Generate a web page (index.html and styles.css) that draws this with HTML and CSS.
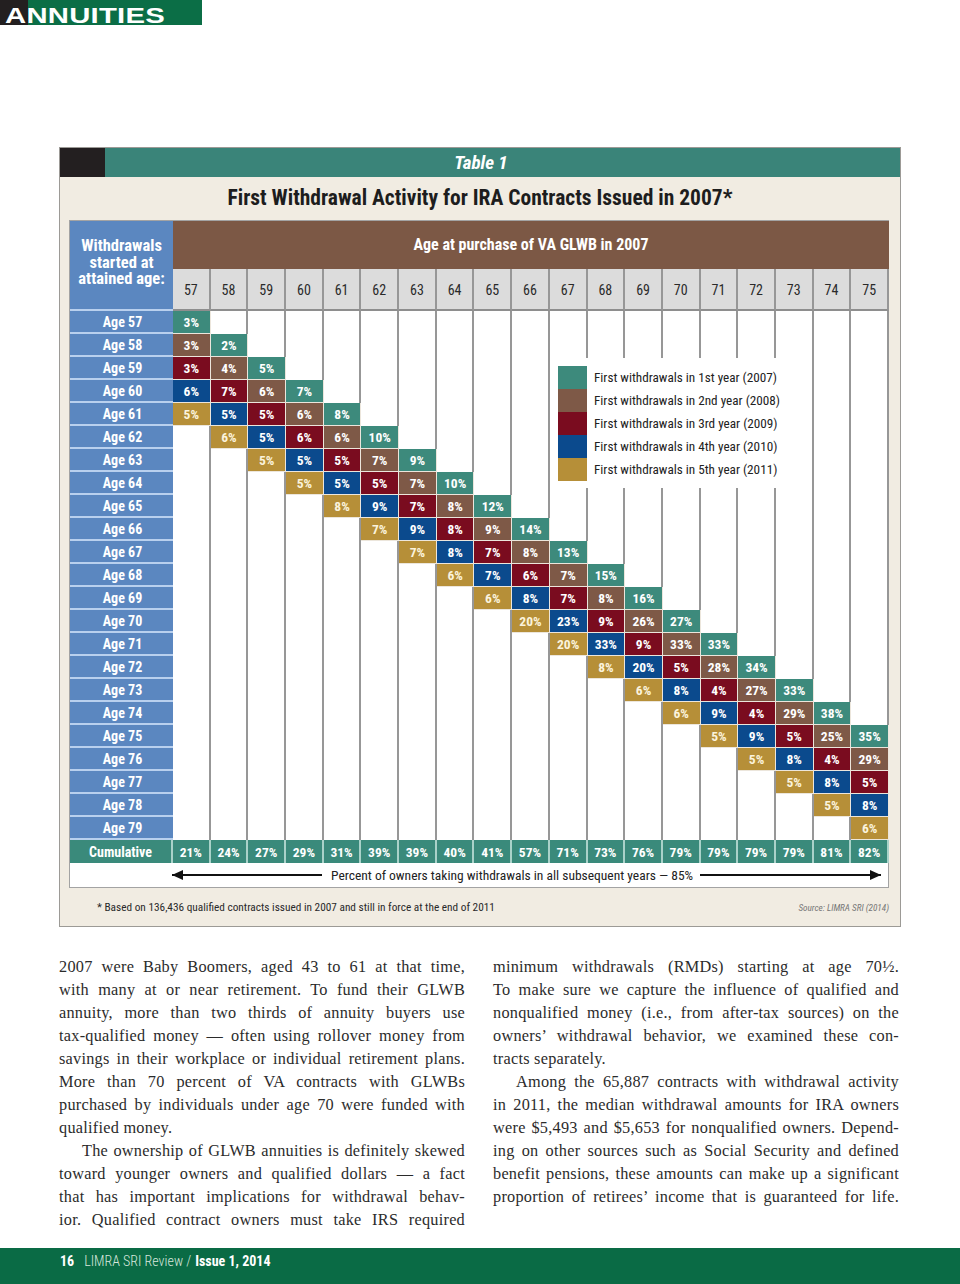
FILE: index.html
```html
<!DOCTYPE html>
<html lang="en">
<head>
<meta charset="utf-8">
<title>Annuities – Table 1</title>
<link rel="stylesheet" href="styles.css">
</head>
<body>
<div class="page">
  <div class="tab"><span class="tab-text">ANNUITIES</span></div>

  <section class="table-box">
    <div class="tbar">Table 1</div>
    <h1 class="ttitle">First Withdrawal Activity for IRA Contracts Issued in 2007*</h1>

    <div class="grid">
      <div class="corner">Withdrawals<br>started at<br>attained age:</div>
      <div class="band">Age at purchase of VA GLWB in 2007</div>
      <div class="num">57</div><div class="num">58</div><div class="num">59</div><div class="num">60</div>
      <div class="num">61</div><div class="num">62</div><div class="num">63</div><div class="num">64</div>
      <div class="num">65</div><div class="num">66</div><div class="num">67</div><div class="num">68</div>
      <div class="num">69</div><div class="num">70</div><div class="num">71</div><div class="num">72</div>
      <div class="num">73</div><div class="num">74</div><div class="num">75</div>

      <div class="cum-label">Cumulative</div>
      <div class="cum">21%</div><div class="cum">24%</div><div class="cum">27%</div><div class="cum">29%</div>
      <div class="cum">31%</div><div class="cum">39%</div><div class="cum">39%</div><div class="cum">40%</div>
      <div class="cum">41%</div><div class="cum">57%</div><div class="cum">71%</div><div class="cum">73%</div>
      <div class="cum">76%</div><div class="cum">79%</div><div class="cum">79%</div><div class="cum">79%</div>
      <div class="cum">79%</div><div class="cum">81%</div><div class="cum">82%</div>

      <div class="arrow-row">
        <span class="arrow left"></span>
        <span class="arrow-text">Percent of owners taking withdrawals in all subsequent years — 85%</span>
        <span class="arrow right"></span>
      </div>

      <div class="legend">
        <div class="lg"><span class="sw y1"></span>First withdrawals in 1st year (2007)</div>
        <div class="lg"><span class="sw y2"></span>First withdrawals in 2nd year (2008)</div>
        <div class="lg"><span class="sw y3"></span>First withdrawals in 3rd year (2009)</div>
        <div class="lg"><span class="sw y4"></span>First withdrawals in 4th year (2010)</div>
        <div class="lg"><span class="sw y5"></span>First withdrawals in 5th year (2011)</div>
      </div>
    </div>

    <div class="foot">
      <span class="note">* Based on 136,436 qualified contracts issued in 2007 and still in force at the end of 2011</span>
      <span class="source">Source: LIMRA SRI (2014)</span>
    </div>
  </section>

  <div class="article">
    <div class="col">
      <p>
        <span class="ln">2007 were Baby Boomers, aged 43 to 61 at that time,</span>
        <span class="ln">with many at or near retirement. To fund their GLWB</span>
        <span class="ln">annuity, more than two thirds of annuity buyers use</span>
        <span class="ln">tax-qualified money — often using rollover money from</span>
        <span class="ln">savings in their workplace or individual retirement plans.</span>
        <span class="ln">More than 70 percent of VA contracts with GLWBs</span>
        <span class="ln">purchased by individuals under age 70 were funded with</span>
        <span class="ln end">qualified money.</span>
      </p>
      <p class="indent">
        <span class="ln">The ownership of GLWB annuities is definitely skewed</span>
        <span class="ln">toward younger owners and qualified dollars — a fact</span>
        <span class="ln">that has important implications for withdrawal behav-</span>
        <span class="ln">ior. Qualified contract owners must take IRS required</span>
      </p>
    </div>
    <div class="col">
      <p>
        <span class="ln">minimum withdrawals (RMDs) starting at age 70½.</span>
        <span class="ln">To make sure we capture the influence of qualified and</span>
        <span class="ln">nonqualified money (i.e., from after-tax sources) on the</span>
        <span class="ln">owners’ withdrawal behavior, we examined these con-</span>
        <span class="ln end">tracts separately.</span>
      </p>
      <p class="indent">
        <span class="ln">Among the 65,887 contracts with withdrawal activity</span>
        <span class="ln">in 2011, the median withdrawal amounts for IRA owners</span>
        <span class="ln">were $5,493 and $5,653 for nonqualified owners. Depend-</span>
        <span class="ln">ing on other sources such as Social Security and defined</span>
        <span class="ln">benefit pensions, these amounts can make up a significant</span>
        <span class="ln">proportion of retirees’ income that is guaranteed for life.</span>
      </p>
    </div>
  </div>

  <footer class="footer">
    <span class="pg">16</span>
    <span class="mag">LIMRA SRI Review /</span>
    <span class="issue">Issue 1, 2014</span>
  </footer>
</div>
<script src="script.js"></script>
</body>
</html>
```
FILE: styles.css
```css
* { box-sizing: border-box; }
html, body { margin: 0; padding: 0; background: #fff; }
body { width: 960px; height: 1284px; overflow: hidden; }

.page {
  height: 1284px;
  display: flex;
  flex-direction: column;
  font-family: "Roboto Condensed", "Liberation Sans", Arial, sans-serif;
  color: #222;
}
.page > * { flex: none; }

/* section tab */
.tab {
  width: 202px;
  height: 25px;
  background: linear-gradient(to right, #231f20 28px, #0b6e46 28px);
  font-family: "Liberation Sans", Arial, sans-serif;
}
.tab-text {
  display: block;
  padding: 8px 0 0 5px;
  line-height: 16px;
  height: 25px;
  font-size: 22px;
  font-weight: bold;
  color: #fff;
  transform: scaleX(1.33);
  transform-origin: 5px 0;
  letter-spacing: 0.2px;
}

/* table box */
.table-box {
  margin: 122px 0 0 59px;
  width: 842px;
  background: #f1ece2;
  border: 1px solid #9c9a96;
}
.tbar {
  height: 29px;
  background: linear-gradient(to right, #231f20 45px, #3a8479 45px);
  color: #fff;
  font-weight: bold;
  font-style: italic;
  font-size: 19px;
  line-height: 29px;
  text-align: center;
  padding-left: 2px;
}
.ttitle {
  margin: 0;
  height: 43px;
  line-height: 41px;
  text-align: center;
  font-size: 21.5px;
  font-weight: bold;
  color: #1d1d1d;
}

.grid {
  position: relative;
  margin: 0 11px 0 9px;
  display: grid;
  grid-template-columns: 103px repeat(19, 1fr);
  grid-template-rows: 48px 42px repeat(23, 23px) 23px 24px;
  border: 1px solid #a3a3a3;
  border-right: none;
  background: #fff;
}

.corner {
  grid-row: 1 / span 2;
  background: #5b87c0;
  color: #fff;
  font-weight: bold;
  font-size: 16.5px;
  line-height: 16.5px;
  text-align: center;
  padding-top: 17px;
  border-bottom: 2px solid #b9d0ee;
}
.band {
  grid-column: 2 / -1;
  background: #7c5845;
  color: #fff;
  font-weight: bold;
  font-size: 16px;
  line-height: 48px;
  text-align: center;
}
.num {
  background: #dcdcdc;
  border-right: 2px solid #979797;
  border-bottom: 2px solid #8e8e8e;
  font-size: 14px;
  color: #2a2a2a;
  display: flex;
  align-items: center;
  justify-content: center;
  padding-top: 2px;
}

.row-label {
  background: #5b87c0;
  color: #fff;
  font-weight: bold;
  font-size: 14px;
  border-bottom: 2px solid #b9d0ee;
  display: flex;
  align-items: center;
  justify-content: center;
  padding-left: 2px;
}
.cell {
  border-right: 2px solid #979797;
  font-size: 13.5px;
  font-weight: bold;
  color: #fff;
  display: flex;
  align-items: center;
  justify-content: center;
}
.cell.y1, .cell.y2, .cell.y3, .cell.y4, .cell.y5 {
  border-right: 1px solid #ece6dc;
  border-bottom: 1px solid #ece6dc;
}
.y1 { background: #3d8a7c; }
.y2 { background: #7e5947; }
.y3 { background: #7a0c1f; }
.y4 { background: #0b4a8d; }
.y5 { background: #b68f38; color: #fbf3dc; }

.cum-label, .cum {
  background: #3a8a7b;
  color: #fff;
  font-weight: bold;
  display: flex;
  align-items: center;
  justify-content: center;
  border-right: 2px solid #a9d2c9;
}
.cum-label { font-size: 14px; }
.cum { font-size: 13.5px; }

.arrow-row {
  grid-column: 1 / -1;
  display: flex;
  align-items: center;
  padding: 0 7px 0 102px;
  border-right: 1px solid #a3a3a3;
  background: #fff;
}
.arrow {
  position: relative;
  height: 2px;
  background: #111;
}
.arrow.left { flex: none; width: 150px; margin-right: 9px; }
.arrow.right { flex: 1; margin-left: 7px; }
.arrow.left::before, .arrow.right::after {
  content: "";
  position: absolute;
  top: -4px;
  border-top: 5px solid transparent;
  border-bottom: 5px solid transparent;
}
.arrow.left::before { left: 0; border-right: 11px solid #111; }
.arrow.right::after { right: 0; border-left: 11px solid #111; }
.arrow-text { font-size: 13.5px; color: #222; white-space: nowrap; }

.legend {
  position: absolute;
  left: 480px;
  top: 137px;
  width: 261px;
  height: 130px;
  background: #fff;
  padding: 8px 0 0 8px;
}
.lg {
  display: flex;
  align-items: center;
  height: 23px;
  font-size: 13.2px;
  color: #222;
  white-space: nowrap;
}
.sw {
  flex: none;
  width: 29px;
  height: 23px;
  margin-right: 7px;
}

.foot {
  height: 38px;
  display: flex;
  align-items: center;
  justify-content: space-between;
  padding: 0 11px 0 37px;
}
.note { font-size: 11.3px; color: #2a2a2a; }
.source { font-size: 9.2px; font-style: italic; color: #777; }

/* article */
.article {
  display: flex;
  gap: 28px;
  margin: 28px 0 0 59px;
  font-family: "Liberation Serif", "Times New Roman", serif;
  font-size: 16.3px;
  letter-spacing: 0.25px;
  line-height: 23px;
  color: #2b2b2b;
}
.col { width: 406px; }
.col p { margin: 0; }
.ln {
  display: block;
  text-align: justify;
  text-align-last: justify;
}
.ln.end { text-align-last: left; }
.indent .ln:first-child { padding-left: 23px; }

/* footer */
.footer {
  margin-top: auto;
  height: 36px;
  background: #0a6b45;
  color: #fff;
  display: flex;
  align-items: flex-start;
  padding: 4px 0 0 60px;
  font-size: 14px;
  line-height: 18px;
}
.pg { font-weight: bold; margin-right: 10px; }
.mag { color: #d7e7de; font-weight: 300; margin-right: 4px; }
.issue { font-weight: bold; }
```
FILE: script.js
```js
const rows = [
  [3], [3, 2], [3, 4, 5], [6, 7, 6, 7], [5, 5, 5, 6, 8],
  [6, 5, 6, 6, 10], [5, 5, 5, 7, 9], [5, 5, 5, 7, 10], [8, 9, 7, 8, 12],
  [7, 9, 8, 9, 14], [7, 8, 7, 8, 13], [6, 7, 6, 7, 15], [6, 8, 7, 8, 16],
  [20, 23, 9, 26, 27], [20, 33, 9, 33, 33], [8, 20, 5, 28, 34], [6, 8, 4, 27, 33],
  [6, 9, 4, 29, 38], [5, 9, 5, 25, 35], [5, 8, 4, 29], [5, 8, 5], [5, 8], [6]
];
const years = ['y1', 'y2', 'y3', 'y4', 'y5'];
const grid = document.querySelector('.grid');
const anchor = document.querySelector('.cum-label');
const frag = document.createDocumentFragment();

rows.forEach((vals, i) => {
  const age = 57 + i;
  const label = document.createElement('div');
  label.className = 'row-label';
  label.textContent = 'Age ' + age;
  frag.appendChild(label);
  const start = Math.max(57, age - 4);
  for (let c = 57; c <= 75; c++) {
    const cell = document.createElement('div');
    const k = c - start;
    if (c >= start && k < vals.length) {
      cell.className = 'cell ' + years[age - c];
      cell.textContent = vals[k] + '%';
    } else {
      cell.className = 'cell';
    }
    frag.appendChild(cell);
  }
});
grid.insertBefore(frag, anchor);
```
